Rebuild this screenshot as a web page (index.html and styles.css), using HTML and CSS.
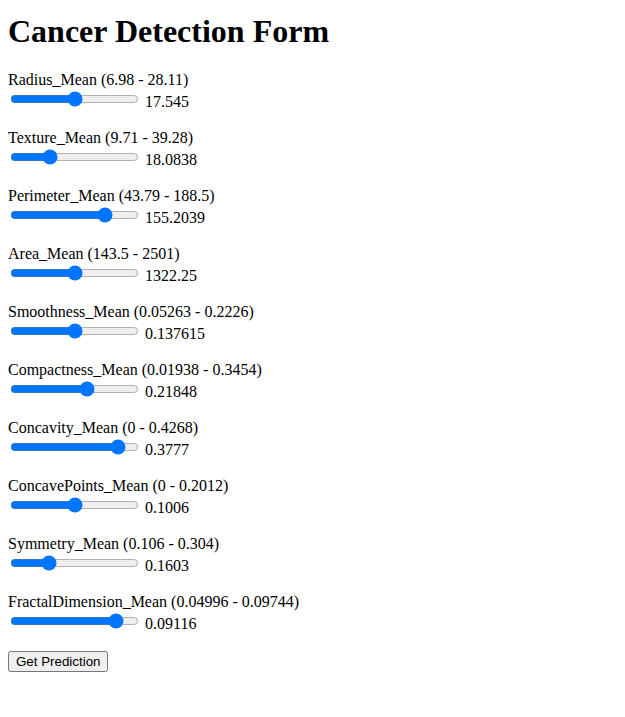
FILE: index.html
```html
<!DOCTYPE html>
<html>
<head>
<meta charset="utf-8">
<link rel="stylesheet" href="styles.css">
</head>
<body>
<h1 class="title">Cancer Detection Form</h1>
<form class="form">
  <div class="field">
    <label>Radius_Mean (6.98 - 28.11)</label><br>
    <input type="range" min="6.98" max="28.11" step="any" value="17.545"> <span>17.545</span>
  </div>
  <div class="field">
    <label>Texture_Mean (9.71 - 39.28)</label><br>
    <input type="range" min="9.71" max="39.28" step="any" value="18.0838"> <span>18.0838</span>
  </div>
  <div class="field">
    <label>Perimeter_Mean (43.79 - 188.5)</label><br>
    <input type="range" min="43.79" max="188.5" step="any" value="155.2039"> <span>155.2039</span>
  </div>
  <div class="field">
    <label>Area_Mean (143.5 - 2501)</label><br>
    <input type="range" min="143.5" max="2501" step="any" value="1322.25"> <span>1322.25</span>
  </div>
  <div class="field">
    <label>Smoothness_Mean (0.05263 - 0.2226)</label><br>
    <input type="range" min="0.05263" max="0.2226" step="any" value="0.137615"> <span>0.137615</span>
  </div>
  <div class="field">
    <label>Compactness_Mean (0.01938 - 0.3454)</label><br>
    <input type="range" min="0.01938" max="0.3454" step="any" value="0.21848"> <span>0.21848</span>
  </div>
  <div class="field">
    <label>Concavity_Mean (0 - 0.4268)</label><br>
    <input type="range" min="0" max="0.4268" step="any" value="0.3777"> <span>0.3777</span>
  </div>
  <div class="field">
    <label>ConcavePoints_Mean (0 - 0.2012)</label><br>
    <input type="range" min="0" max="0.2012" step="any" value="0.1006"> <span>0.1006</span>
  </div>
  <div class="field">
    <label>Symmetry_Mean (0.106 - 0.304)</label><br>
    <input type="range" min="0.106" max="0.304" step="any" value="0.1603"> <span>0.1603</span>
  </div>
  <div class="field">
    <label>FractalDimension_Mean (0.04996 - 0.09744)</label><br>
    <input type="range" min="0.04996" max="0.09744" step="any" value="0.09116"> <span>0.09116</span>
  </div>
  <button type="button" class="btn">Get Prediction</button>
</form>
</body>
</html>
```
FILE: styles.css
```css
body {
  margin: 8px;
  font-family: "Liberation Serif", "Times New Roman", serif;
  font-size: 16px;
  color: #000;
  background: #fff;
}
.title {
  font-size: 32px;
  font-weight: bold;
  margin: 5px 0 21px;
}
.field {
  margin-bottom: 18px;
}
.btn {
  font-family: "Liberation Sans", Arial, sans-serif;
  font-size: 13.333px;
}
```
